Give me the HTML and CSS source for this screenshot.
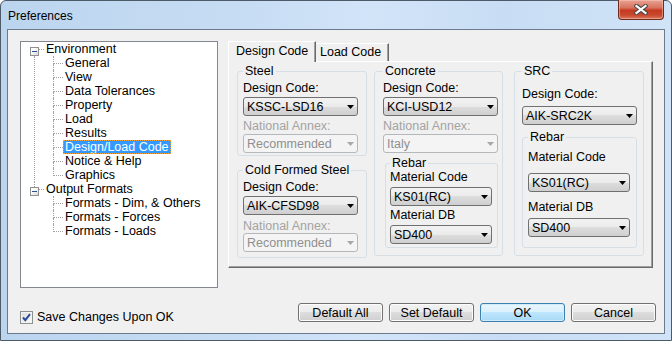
FILE: index.html
```html
<!DOCTYPE html>
<html lang="en">
<head>
    <meta charset="UTF-8">
    <meta name="viewport" content="width=device-width, initial-scale=1.0">
    <title>Preferences</title>
    <link rel="stylesheet" href="styles.css">
</head>
<body>
    <div class="window">
        <div class="titlebar">
            <span class="title">Preferences</span>
            <button class="close-btn" type="button" aria-label="Close">
                <svg width="14" height="11" viewBox="0 0 14 11">
                    <path d="M2.5 2l9 7M11.5 2l-9 7" stroke="#4a4a4a" stroke-width="4.2" stroke-linecap="square" fill="none"/>
                    <path d="M2.5 2l9 7M11.5 2l-9 7" stroke="#fff" stroke-width="2.2" stroke-linecap="square" fill="none"/>
                </svg>
            </button>
        </div>

        <div class="client">
            <div class="main">
                <div class="tree">
                    <div class="tree-node">
                        <div class="tree-row">
                            <span class="expander"><span class="stem"></span><span class="expander-box"><span class="minus"></span></span></span>
                            <span class="tree-dash"></span>
                            <span class="tree-label">Environment</span>
                        </div>
                        <div class="tree-children has-sibling">
                            <div class="tree-row"><span class="elbow"><span class="elbow-top"></span><span class="elbow-bottom"></span></span><span class="tree-label">General</span></div>
                            <div class="tree-row"><span class="elbow"><span class="elbow-top"></span><span class="elbow-bottom"></span></span><span class="tree-label">View</span></div>
                            <div class="tree-row"><span class="elbow"><span class="elbow-top"></span><span class="elbow-bottom"></span></span><span class="tree-label">Data Tolerances</span></div>
                            <div class="tree-row"><span class="elbow"><span class="elbow-top"></span><span class="elbow-bottom"></span></span><span class="tree-label">Property</span></div>
                            <div class="tree-row"><span class="elbow"><span class="elbow-top"></span><span class="elbow-bottom"></span></span><span class="tree-label">Load</span></div>
                            <div class="tree-row"><span class="elbow"><span class="elbow-top"></span><span class="elbow-bottom"></span></span><span class="tree-label">Results</span></div>
                            <div class="tree-row"><span class="elbow"><span class="elbow-top"></span><span class="elbow-bottom"></span></span><span class="tree-label selected">Design/Load Code</span></div>
                            <div class="tree-row"><span class="elbow"><span class="elbow-top"></span><span class="elbow-bottom"></span></span><span class="tree-label">Notice &amp; Help</span></div>
                            <div class="tree-row"><span class="elbow last"><span class="elbow-top"></span><span class="elbow-bottom"></span></span><span class="tree-label">Graphics</span></div>
                        </div>
                    </div>
                    <div class="tree-node">
                        <div class="tree-row">
                            <span class="expander"><span class="stem line"></span><span class="expander-box"><span class="minus"></span></span></span>
                            <span class="tree-dash"></span>
                            <span class="tree-label">Output Formats</span>
                        </div>
                        <div class="tree-children">
                            <div class="tree-row"><span class="elbow"><span class="elbow-top"></span><span class="elbow-bottom"></span></span><span class="tree-label">Formats - Dim, &amp; Others</span></div>
                            <div class="tree-row"><span class="elbow"><span class="elbow-top"></span><span class="elbow-bottom"></span></span><span class="tree-label">Formats - Forces</span></div>
                            <div class="tree-row"><span class="elbow last"><span class="elbow-top"></span><span class="elbow-bottom"></span></span><span class="tree-label">Formats - Loads</span></div>
                        </div>
                    </div>
                </div>

                <div class="tabs">
                    <div class="tab-strip">
                        <div class="tab active">Design Code</div>
                        <div class="tab">Load Code</div>
                    </div>
                    <div class="tab-panel">
                        <div class="col col-steel">
                            <fieldset class="group steel">
                                <legend>Steel</legend>
                                <div class="field-label">Design Code:</div>
                                <div class="combo mt2"><span>KSSC-LSD16</span><svg class="arrow" width="7" height="4" viewBox="0 0 7 4"><path d="M0 0h7L3.5 4z"/></svg></div>
                                <div class="field-label disabled mt3">National Annex:</div>
                                <div class="combo disabled mt1"><span>Recommended</span><svg class="arrow" width="7" height="4" viewBox="0 0 7 4"><path d="M0 0h7L3.5 4z"/></svg></div>
                            </fieldset>
                            <fieldset class="group cold">
                                <legend>Cold Formed Steel</legend>
                                <div class="field-label">Design Code:</div>
                                <div class="combo mt2"><span>AIK-CFSD98</span><svg class="arrow" width="7" height="4" viewBox="0 0 7 4"><path d="M0 0h7L3.5 4z"/></svg></div>
                                <div class="field-label disabled mt4">National Annex:</div>
                                <div class="combo disabled"><span>Recommended</span><svg class="arrow" width="7" height="4" viewBox="0 0 7 4"><path d="M0 0h7L3.5 4z"/></svg></div>
                            </fieldset>
                        </div>

                        <div class="col col-concrete">
                            <fieldset class="group concrete">
                                <legend>Concrete</legend>
                                <div class="field-label">Design Code:</div>
                                <div class="combo mt2"><span>KCI-USD12</span><svg class="arrow" width="7" height="4" viewBox="0 0 7 4"><path d="M0 0h7L3.5 4z"/></svg></div>
                                <div class="field-label disabled mt3">National Annex:</div>
                                <div class="combo disabled mt1"><span>Italy</span><svg class="arrow" width="7" height="4" viewBox="0 0 7 4"><path d="M0 0h7L3.5 4z"/></svg></div>
                                <fieldset class="group rebar rebar-concrete">
                                    <legend>Rebar</legend>
                                    <div class="field-label">Material Code</div>
                                    <div class="combo small mt3"><span>KS01(RC)</span><svg class="arrow" width="7" height="4" viewBox="0 0 7 4"><path d="M0 0h7L3.5 4z"/></svg></div>
                                    <div class="field-label mt2">Material DB</div>
                                    <div class="combo small mt3"><span>SD400</span><svg class="arrow" width="7" height="4" viewBox="0 0 7 4"><path d="M0 0h7L3.5 4z"/></svg></div>
                                </fieldset>
                            </fieldset>
                        </div>

                        <div class="col col-src">
                            <fieldset class="group src">
                                <legend>SRC</legend>
                                <div class="field-label">Design Code:</div>
                                <div class="combo mt5"><span>AIK-SRC2K</span><svg class="arrow" width="7" height="4" viewBox="0 0 7 4"><path d="M0 0h7L3.5 4z"/></svg></div>
                                <fieldset class="group rebar rebar-src">
                                    <legend>Rebar</legend>
                                    <div class="field-label">Material Code</div>
                                    <div class="combo small mt9"><span>KS01(RC)</span><svg class="arrow" width="7" height="4" viewBox="0 0 7 4"><path d="M0 0h7L3.5 4z"/></svg></div>
                                    <div class="field-label mt8">Material DB</div>
                                    <div class="combo small mt4"><span>SD400</span><svg class="arrow" width="7" height="4" viewBox="0 0 7 4"><path d="M0 0h7L3.5 4z"/></svg></div>
                                </fieldset>
                            </fieldset>
                        </div>
                    </div>
                </div>
            </div>

            <div class="footer">
                <label class="check">
                    <span class="check-box">
                        <svg width="11" height="11" viewBox="0 0 11 11"><path d="M2 5.5l2.3 2.6L9 2.2" stroke="#2b4a9a" stroke-width="2" fill="none"/></svg>
                    </span>
                    Save Changes Upon OK
                </label>
                <div class="buttons">
                    <button type="button" class="btn">Default All</button>
                    <button type="button" class="btn">Set Default</button>
                    <button type="button" class="btn default">OK</button>
                    <button type="button" class="btn">Cancel</button>
                </div>
            </div>
        </div>
    </div>
</body>
</html>
```

FILE: styles.css
```css
* {
    margin: 0;
    padding: 0;
    box-sizing: border-box;
}

body {
    background-color: #ffffff;
    font-family: 'Liberation Sans', Arial, sans-serif;
    font-size: 12px;
    color: #000;
}

.window {
    width: 672px;
    height: 341px;
    border: 1px solid #4d5a68;
    border-radius: 6px 6px 0 0;
    background: linear-gradient(90deg, #bcd5ef 0%, #c6dcf3 35%, #d2e4f8 55%, #c8ddf4 75%, #d0e3f7 100%);
    padding: 0 6px 6px 6px;
    display: flex;
    flex-direction: column;
}

.titlebar {
    height: 28px;
    display: flex;
    align-items: flex-start;
    justify-content: space-between;
}

.title {
    padding: 8px 0 0 1px;
    line-height: 14px;
    color: #000;
}

.close-btn {
    width: 46px;
    height: 20px;
    margin-top: -1px;
    margin-right: 1px;
    border: 1px solid #6e2a1f;
    border-top: none;
    border-radius: 0 0 4px 4px;
    background: linear-gradient(#e7a293 0%, #d8745f 40%, #c4391f 55%, #c84a30 80%, #dc7a5c 100%);
    box-shadow: inset 0 0 0 1px rgba(255, 210, 200, 0.45);
    display: flex;
    align-items: center;
    justify-content: center;
}

.client {
    flex: 1;
    border: 1px solid #6b7a8c;
    background-color: #f0f0f0;
    padding: 11px 11px 0 12px;
    display: flex;
    flex-direction: column;
    font-size: 12.5px;
}

.main {
    display: flex;
    align-items: flex-start;
    gap: 10px;
}

/* tree */

.tree {
    width: 198px;
    height: 247px;
    background-color: #fff;
    border: 1px solid #828790;
    padding-left: 9px;
}

.tree-row {
    display: flex;
    height: 14px;
    line-height: 14px;
    white-space: nowrap;
}

.expander {
    width: 9px;
    display: flex;
    flex-direction: column;
}

.stem {
    height: 5px;
    margin-left: 4px;
}

.stem.line {
    border-left: 1px dotted #a0a0a0;
}

.expander-box {
    width: 9px;
    height: 9px;
    border: 1px solid #919191;
    background: linear-gradient(135deg, #ffffff 30%, #d8d8d8 100%);
    display: flex;
    align-items: center;
    justify-content: center;
}

.minus {
    width: 5px;
    height: 1px;
    background-color: #2c4f94;
}

.tree-dash {
    width: 5px;
    height: 8px;
    border-bottom: 1px dotted #a0a0a0;
}

.tree-label {
    padding: 0 2px;
}

.tree-label.selected {
    background-color: #3399ff;
    color: #fff;
    outline: 1px dotted #f2a23c;
    outline-offset: -1px;
}

.tree-children {
    margin-left: 4px;
    padding-left: 19px;
}

.tree-children.has-sibling {
    border-left: 1px dotted #a0a0a0;
    padding-left: 18px;
}

.elbow {
    width: 10px;
    display: flex;
    flex-direction: column;
}

.elbow-top {
    height: 8px;
    border-left: 1px dotted #a0a0a0;
    border-bottom: 1px dotted #a0a0a0;
}

.elbow-bottom {
    flex: 1;
    border-left: 1px dotted #a0a0a0;
}

.elbow.last .elbow-bottom {
    border-left: none;
}

/* tabs */

.tabs {
    width: 425px;
}

.tab-strip {
    display: flex;
    align-items: flex-end;
    height: 20px;
}

.tab {
    width: 73px;
    height: 18px;
    padding: 1px 0 0 4px;
    line-height: 14px;
    border-top: 1px solid #fff;
    border-right: 1px solid #696969;
    box-shadow: inset -1px 0 0 #a0a0a0;
}

.tab.active {
    position: relative;
    width: 88px;
    height: 21px;
    margin-bottom: -1px;
    padding: 2px 0 0 7px;
    border-left: 1px solid #fff;
    background-color: #f0f0f0;
}

.tab-panel {
    height: 207px;
    border: 1px solid #fff;
    border-right-color: #696969;
    border-bottom-color: #696969;
    box-shadow: inset -1px -1px 0 #a0a0a0;
    padding: 2px 0 0 8px;
    display: flex;
    align-items: flex-start;
}

.col {
    display: flex;
    flex-direction: column;
}

.col-steel {
    width: 130px;
    gap: 7px;
}

.col-concrete {
    width: 129px;
    margin-left: 7px;
}

.col-src {
    width: 130px;
    margin-left: 11px;
}

/* group boxes */

.group {
    margin: 0;
    min-width: 0;
    border: 1px solid #d5dfe5;
    border-radius: 3px;
    display: flex;
    flex-direction: column;
}

.group legend {
    padding: 0 2px;
    line-height: 14px;
}

.steel {
    padding: 3px 8px 2px 5px;
}

.cold {
    padding: 3px 8px 5px 5px;
}

.concrete {
    padding: 3px 4px 7px 8px;
}

.src {
    padding: 9px 6px 7px 7px;
}

.rebar-concrete {
    margin: 3px 0 0 2px;
    padding: 0 5px 3px 4px;
}

.rebar-src {
    margin-top: 5px;
    padding: 6px 5px 10px 5px;
}

.field-label {
    line-height: 14px;
    white-space: nowrap;
}

.field-label.disabled {
    color: #a3a3a3;
}

/* combo boxes */

.combo {
    width: 115px;
    height: 19px;
    border: 1px solid #707070;
    border-radius: 3px;
    background: linear-gradient(#f2f2f2 0%, #ebebeb 50%, #dddddd 50%, #cfcfcf 100%);
    padding: 0 3px 0 3px;
    display: flex;
    align-items: center;
    justify-content: space-between;
    line-height: 14px;
}

.combo.small {
    width: 102px;
}

.combo .arrow {
    fill: #000;
}

.combo.disabled {
    border-color: #b5b8ba;
    background: #f4f4f4;
    color: #8f8f8f;
}

.combo.disabled .arrow {
    fill: #a8a8a8;
}

.mt1 { margin-top: 1px; }
.mt2 { margin-top: 2px; }
.mt3 { margin-top: 3px; }
.mt4 { margin-top: 4px; }
.mt5 { margin-top: 5px; }
.mt8 { margin-top: 8px; }
.mt9 { margin-top: 9px; }

/* footer */

.footer {
    display: flex;
    align-items: flex-start;
    margin-top: 15px;
    margin-right: -3px;
}

.check {
    display: flex;
    align-items: center;
    gap: 4px;
    margin-top: 7px;
    line-height: 14px;
}

.check-box {
    width: 13px;
    height: 13px;
    border: 1px solid #8e8f8f;
    background: linear-gradient(135deg, #dcdcdc 0%, #fbfbfb 100%);
    box-shadow: inset 0 0 0 1px #f4f4f4;
    display: flex;
    align-items: center;
    justify-content: center;
}

.buttons {
    margin-left: auto;
    display: flex;
    gap: 6px;
}

.btn {
    width: 85px;
    height: 19px;
    border: 1px solid #707070;
    border-radius: 3px;
    background: linear-gradient(#f2f2f2 0%, #ebebeb 50%, #dddddd 50%, #cfcfcf 100%);
    box-shadow: inset 0 0 0 1px #fcfcfc;
    font-family: inherit;
    font-size: 12.5px;
    color: #000;
}

.btn.default {
    border-color: #3c7fb1;
    background: linear-gradient(#eaf6fd 0%, #d9f0fc 50%, #bee6fd 50%, #a7d9f5 100%);
    box-shadow: inset 0 0 0 1px #d0ecfb;
}
```
